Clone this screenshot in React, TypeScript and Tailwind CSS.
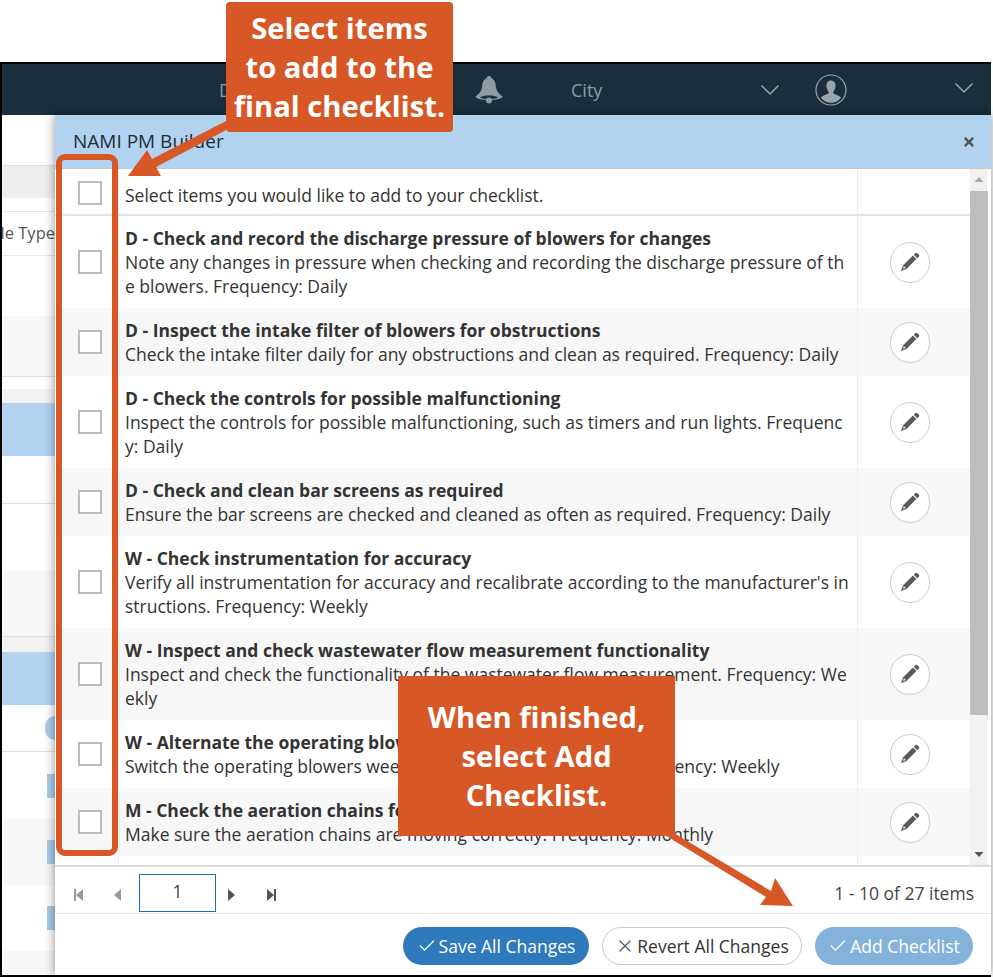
import React from 'react';
import { Check, X } from 'lucide-react';
import { FaTimes } from 'react-icons/fa';

const rows = [
  { title: 'D - Check and record the discharge pressure of blowers for changes', body: 'Note any changes in pressure when checking and recording the discharge pressure of the blowers. Frequency: Daily' },
  { title: 'D - Inspect the intake filter of blowers for obstructions', body: 'Check the intake filter daily for any obstructions and clean as required. Frequency: Daily' },
  { title: 'D - Check the controls for possible malfunctioning', body: 'Inspect the controls for possible malfunctioning, such as timers and run lights. Frequency: Daily' },
  { title: 'D - Check and clean bar screens as required', body: 'Ensure the bar screens are checked and cleaned as often as required. Frequency: Daily' },
  { title: 'W - Check instrumentation for accuracy', body: "Verify all instrumentation for accuracy and recalibrate according to the manufacturer's instructions. Frequency: Weekly" },
  { title: 'W - Inspect and check wastewater flow measurement functionality', body: 'Inspect and check the functionality of the wastewater flow measurement. Frequency: Weekly' },
  { title: 'W - Alternate the operating blowers weekly', body: 'Switch the operating blowers weekly to ensure even runtime. Frequency: Weekly' },
  { title: 'M - Check the aeration chains for movement', body: 'Make sure the aeration chains are moving correctly. Frequency: Monthly' },
];

const Checkbox = () => <div className="w-6 h-6 border-2 border-[#bdbdbd] bg-white" />;

const PagerIcon = ({ dir, bar, color }: { dir: 'left' | 'right'; bar?: boolean; color: string }) => (
  <svg width="12" height="14" viewBox="0 0 12 14" fill={color}>
    {dir === 'left' ? (
      <>
        {bar && <rect x="1" y="1" width="2" height="12" />}
        <path d="M10 1v12L3 7z" />
      </>
    ) : (
      <>
        <path d="M2 1v12l7-6z" />
        {bar && <rect x="9" y="1" width="2" height="12" />}
      </>
    )}
  </svg>
);

const UserIcon = () => (
  <svg width="32" height="32" viewBox="0 0 32 32" className="text-[#9aa5ab]">
    <circle cx="16" cy="16" r="15" fill="none" stroke="currentColor" strokeWidth="1.2" />
    <path
      fill="currentColor"
      d="M16 6.500c3 0 4.600 2.400 4.600 5.200 0 2.400-1 4.600-2.200 5.800v2.100c2.200 1 6 2 7.700 4.200-2.400 3-6 5-10.100 5s-7.700-2-10.100-5c1.700-2.200 5.500-3.200 7.700-4.200v-2.100c-1.200-1.200-2.200-3.400-2.200-5.800 0-2.800 1.600-5.200 4.600-5.200z"
    />
  </svg>
);

const BellIcon = () => (
  <svg width="28" height="28" viewBox="0 0 28 28" fill="#8f9ba3">
    <circle cx="14" cy="2.500" r="2.500" />
    <path d="M14 2c4.500 0 6.500 3.500 6.800 8 .3 4 2.200 7 6.700 10.500 0 2-6 3.500-13.500 3.500S.5 22.500.5 20.500C5 17 6.900 14 7.200 10 7.500 5.500 9.500 2 14 2z" />
    <path d="M5 21.500c2-1.500 5.500-2 9-2s7 .5 9 2c-2 1-5.500 1.500-9 1.500s-7-.5-9-1.500z" fill="#1a2e3c" />
    <circle cx="14" cy="24.500" r="3" />
  </svg>
);

const PencilIcon = () => (
  <svg width="20" height="20" viewBox="0 0 20 20" fill="#5a5a5a">
    <path d="M15.300 1.200a1.500 1.500 0 0 1 2.100 0l1.400 1.400a1.500 1.500 0 0 1 0 2.100l-1.600 1.600-3.500-3.500z" />
    <path d="M12.900 3.600l3.500 3.500L6.500 17 1 19l2-5.500zM3.900 14.300l-.9 2.700 2.700-.9z" fillRule="evenodd" />
  </svg>
);

const Chevron = () => (
  <svg width="20" height="12" viewBox="0 0 20 12" fill="none" stroke="#9aa5ab" strokeWidth="1.5">
    <path d="M1.500 1.500L10 10l8.500-8.500" />
  </svg>
);

const App: React.FC = () => {
  return (
    <div className="relative w-[993px] h-[977px] bg-white overflow-hidden font-['Open_Sans',sans-serif] text-[17.5px] text-[#333]">
      <div className="h-[62px]" />

      {/* App frame behind the dialog */}
      <div className="relative h-[915px] w-[991px] border-t-2 border-l-2 border-b-2 border-black">
        <div className="h-[51px] bg-[#1a2e3c] flex items-center text-[#8f9ba3] text-[18px]">
          <span className="ml-[217px] w-[256px] pt-[1px]">D</span>
          <BellIcon />
          <span className="ml-[68px] w-[189px] pt-[1px]">City</span>
          <Chevron />
          <div className="ml-[35px]"><UserIcon /></div>
          <div className="ml-[107px] -mt-[4px]"><Chevron /></div>
        </div>

        {/* Left grid peeking out from under the dialog */}
        <div className="w-[53px] text-[#555] text-[16.5px]">
          <div className="h-[50px]" />
          <div className="h-[33px] bg-[#eeeeee] border-t border-[#ddd]" />
          <div className="h-[13px]" />
          <div className="h-[45px] border-t border-b border-[#e5e5e5] flex items-center justify-end whitespace-nowrap">le Type</div>
          <div className="h-[60px]" />
          <div className="h-[61px] bg-[#f7f7f7] border-b border-[#ddd]" />
          <div className="h-[12px]" />
          <div className="h-[14px] bg-[#f2f2f2]" />
          <div className="h-[53px] bg-[#b1d3f0]" />
          <div className="h-[48px] border-b border-[#ddd]" />
          <div className="h-[67px]" />
          <div className="h-[66px] bg-[#f7f7f7] border-b border-[#ddd]" />
          <div className="h-[15px] bg-[#f2f2f2]" />
          <div className="h-[53px] bg-[#b1d3f0]" />
          <div className="h-[47px] border-b border-[#ddd] flex items-center justify-end">
            <div className="w-[10px] h-[24px] rounded-l-full bg-[#a9cdea]" />
          </div>
          <div className="h-[67px] flex items-center justify-end"><div className="w-[8px] h-[24px] bg-[#a9cdea]" /></div>
          <div className="h-[66px] bg-[#f7f7f7] flex items-center justify-end"><div className="w-[8px] h-[24px] bg-[#a9cdea]" /></div>
          <div className="h-[66px] flex items-center justify-end"><div className="w-[8px] h-[24px] bg-[#a9cdea]" /></div>
          <div className="h-[24px] bg-[#f7f7f7]" />
        </div>

        {/* Dialog */}
        <div className="absolute left-[53px] top-[51px] w-[936px] h-[860px] bg-white flex flex-col shadow-[0_0_10px_rgba(0,0,0,0.45)]">
          <div className="h-[54px] shrink-0 bg-[#b1d3f0] border-b border-[#c8c8c8] flex items-center justify-between pl-[18px] pr-[15px] text-[19px] text-[#1f2d38]">
            <span>NAMI PM Builder</span>
            <FaTimes className="w-[14px] h-[14px] text-[#555]" />
          </div>

          <div className="flex h-[698px] shrink-0 border-b-2 border-[#ddd]">
            <div className="w-[915px] shrink-0 flex flex-col overflow-hidden">
              <div className="flex h-[47px] shrink-0 border-b-2 border-[#e3e3e3]">
                <div className="w-[64px] border-r border-[#eee] flex items-center pl-[23px] pt-[2px]"><Checkbox /></div>
                <div className="w-[739px] border-r border-[#eee] pl-[6px] flex items-center pt-[7px]">Select items you would like to add to your checklist.</div>
                <div className="flex-1" />
              </div>
              {rows.map((row, i) => (
                <div key={row.title} className={`flex shrink-0 ${i % 2 === 1 ? 'bg-[#f7f7f7]' : 'bg-white'}`}>
                  <div className="w-[64px] border-r border-[#eee] flex items-center pl-[23px]"><Checkbox /></div>
                  <div className="w-[739px] border-r border-[#eee] pl-[6px] pr-[8px] py-[10px] leading-[24px] break-all">
                    <div className="font-bold">{row.title}</div>
                    <div>{row.body}</div>
                  </div>
                  <div className="flex-1 flex items-center justify-center pr-[8px]">
                    <div className="w-10 h-[41px] rounded-full border border-[#ccc] bg-white flex items-center justify-center">
                      <PencilIcon />
                    </div>
                  </div>
                </div>
              ))}
              <div className="flex flex-1">
                <div className="w-[64px] border-r border-[#eee]" />
                <div className="w-[739px] border-r border-[#eee]" />
              </div>
            </div>
            <div className="flex-1 flex flex-col items-center bg-[#f1f1f1] mr-[3px]">
              <svg width="10" height="22" viewBox="0 0 10 22" fill="#a8a8a8" className="shrink-0"><path d="M5 8l4.500 5h-9z" /></svg>
              <div className="w-full flex-1 bg-[#bdbdbd]" />
              <div className="h-[130px] shrink-0" />
              <svg width="10" height="20" viewBox="0 0 10 20" fill="#555" className="shrink-0"><path d="M5 12l4.500-5h-9z" /></svg>
            </div>
          </div>

          <div className="h-[47px] shrink-0 border-b border-[#e8e8e8] flex items-start pt-[7px] pl-[18px] pr-[17px]">
            <div className="mt-[14px]"><PagerIcon dir="left" bar color="#999" /></div>
            <div className="ml-[26px] mt-[14px]"><PagerIcon dir="left" color="#999" /></div>
            <div className="ml-[16px] w-[77px] h-[38px] border border-[#1a6fb5] flex items-center justify-center pb-1 text-[#444]">1</div>
            <div className="ml-[10px] mt-[14px]"><PagerIcon dir="right" color="#555" /></div>
            <div className="ml-[27px] mt-[14px]"><PagerIcon dir="right" bar color="#555" /></div>
            <div className="ml-auto mt-[6px] text-[#444]">1 - 10 of 27 items</div>
          </div>

          <div className="flex-1 flex items-start justify-end gap-[13px] pt-[13px] pr-[18px]">
            <div className="w-[186px] h-[38px] rounded-full bg-[#2f79bd] text-white flex items-center justify-center gap-[2px]">
              <Check className="w-[20px] h-[20px]" strokeWidth={1.5} />Save All Changes
            </div>
            <div className="w-[200px] h-[38px] rounded-full border border-[#ccc] bg-white text-[#333] flex items-center justify-center gap-[2px]">
              <X className="w-[20px] h-[20px] text-[#555]" strokeWidth={1.5} />Revert All Changes
            </div>
            <div className="w-[158px] h-[38px] rounded-full bg-[#84b2db] text-white flex items-center justify-center gap-[2px]">
              <Check className="w-[20px] h-[20px]" strokeWidth={1.5} />Add Checklist
            </div>
          </div>
        </div>
      </div>

      {/* Tutorial annotations */}
      <div className="absolute left-[56px] top-[154px] w-[62px] h-[702px] border-[6px] border-[#d75726] rounded-[9px]" />
      <svg className="absolute left-0 top-0 pointer-events-none" width="993" height="977" fill="#d75726">
        <path d="M230 119L152 159L147 150L128 176L161 176L156 167L230 128z" />
        <path d="M672 832L771 891L775 878L793 906L760 905L766 897L660 832z" />
      </svg>
      <div className="absolute left-[226px] top-[2px] w-[227px] h-[130px] rounded-[4px] bg-[#d75726] text-white font-bold text-[29.2px] leading-[39px] text-center pt-[7px]">
        Select items<br />to add to the<br />final checklist.
      </div>
      <div className="absolute left-[398px] top-[676px] w-[277px] h-[160px] bg-[#d75726] text-white font-bold text-[29.2px] leading-[39px] text-center pt-[22px]">
        When finished,<br />select Add<br />Checklist.
      </div>
    </div>
  );
};

export default App;
